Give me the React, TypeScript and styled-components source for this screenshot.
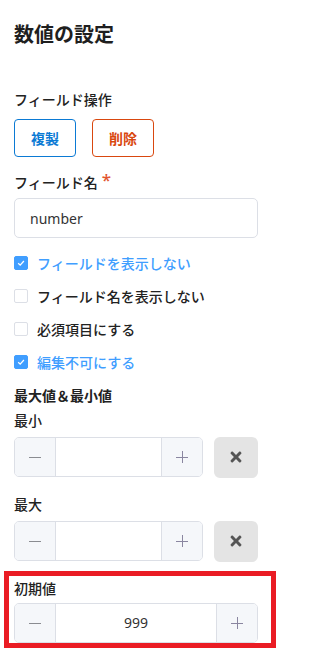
import React from 'react'
import styled, { createGlobalStyle } from 'styled-components'
import { FaTimes } from 'react-icons/fa'

const GlobalStyle = createGlobalStyle`
  body {
    margin: 0;
    background: #fff;
    font-family: "Noto Sans", "Noto Sans CJK JP", sans-serif;
    color: #222;
  }
`

const Panel = styled.div`
  width: 244px;
  padding: 23px 22px 0 14px;
`

const Title = styled.h2`
  margin: 0 0 43px;
  font-size: 20px;
  line-height: 24px;
  font-weight: 700;
  color: #1f1f1f;
`

const Label = styled.div<{ bold?: boolean; gap?: number }>`
  font-size: 14px;
  line-height: 20px;
  font-weight: ${p => (p.bold ? 700 : 500)};
  color: #222;
  margin-bottom: ${p => p.gap ?? 5}px;
  display: flex;
  align-items: flex-start;
`

const Required = styled.span`
  color: #e2542f;
  font-size: 17px;
  line-height: 16px;
  margin-left: 4px;
  margin-top: -1px;
`

const ButtonRow = styled.div`
  display: flex;
  gap: 16px;
  margin-bottom: 16px;
`

const OutlineButton = styled.button<{ tone: 'blue' | 'red' }>`
  width: 62px;
  height: 38px;
  box-sizing: border-box;
  background: #fff;
  border: 1px solid ${p => (p.tone === 'blue' ? '#0b7ad4' : '#d9480f')};
  color: ${p => (p.tone === 'blue' ? '#0b7ad4' : '#d9480f')};
  border-radius: 4px;
  font-family: inherit;
  font-size: 14px;
  font-weight: 700;
  padding: 0;
`

const TextInput = styled.input`
  box-sizing: border-box;
  width: 244px;
  height: 40px;
  border: 1px solid #dcdfe6;
  border-radius: 5px;
  padding: 0 15px;
  font-family: inherit;
  font-size: 14px;
  color: #333;
  outline: none;
  margin-bottom: 8.5px;
`

const CheckRow = styled.label<{ checked?: boolean }>`
  display: flex;
  align-items: center;
  gap: 9px;
  height: 33px;
  font-size: 14px;
  font-weight: 500;
  color: ${p => (p.checked ? '#409eff' : '#222')};
`

const Box = styled.span<{ checked?: boolean }>`
  width: 14px;
  height: 14px;
  box-sizing: border-box;
  border-radius: 2px;
  border: 1px solid ${p => (p.checked ? '#409eff' : '#dcdfe6')};
  background: ${p => (p.checked ? '#409eff' : '#fff')};
  display: flex;
  align-items: center;
  justify-content: center;
`

const Checks = styled.div`
  margin-bottom: 7px;
`

const StepperLine = styled.div<{ gap?: number }>`
  display: flex;
  gap: 11px;
  margin-bottom: ${p => p.gap ?? 0}px;
`

const Stepper = styled.div<{ width: number }>`
  box-sizing: border-box;
  width: ${p => p.width}px;
  height: 40px;
  border: 1px solid #dcdfe6;
  border-radius: 5px;
  display: flex;
  overflow: hidden;
`

const StepButton = styled.span<{ side: 'left' | 'right' }>`
  width: 40px;
  flex: none;
  background: #f5f7fa;
  display: flex;
  align-items: center;
  justify-content: center;
  ${p => (p.side === 'left' ? 'border-right' : 'border-left')}: 1px solid #dcdfe6;
`

const StepValue = styled.span`
  flex: 1;
  display: flex;
  align-items: center;
  justify-content: center;
  font-size: 14px;
  color: #333;
`

const ClearButton = styled.button`
  width: 44px;
  height: 41px;
  border: none;
  border-radius: 6px;
  background: #e4e4e4;
  color: #555;
  display: flex;
  align-items: center;
  justify-content: center;
  padding: 0;
`

const Highlight = styled.section`
  margin: 9px 0 0 -10px;
  width: 272px;
  box-sizing: border-box;
  border: 5px solid #ea1c24;
  padding: 3px 13px 0 5px;
`

const Check = () => (
  <svg width="10" height="10" viewBox="0 0 10 10">
    <path d="M2.2 5.2 L4.2 7.1 L7.9 3" fill="none" stroke="#fff" strokeWidth="1.3" />
  </svg>
)

const Minus = () => (
  <svg width="12" height="12" viewBox="0 0 12 12">
    <path d="M0 6.5 H12" stroke="#8a8c91" strokeWidth="1" />
  </svg>
)

const Plus = () => (
  <svg width="12" height="12" viewBox="0 0 12 12">
    <path d="M0 6.5 H12 M6.5 0 V12" stroke="#8a86a0" strokeWidth="1" />
  </svg>
)

const NumberField = ({ width, value }: { width: number; value?: string }) => (
  <Stepper width={width}>
    <StepButton side="left"><Minus /></StepButton>
    <StepValue>{value}</StepValue>
    <StepButton side="right"><Plus /></StepButton>
  </Stepper>
)

const options = [
  { label: 'フィールドを表示しない', checked: true },
  { label: 'フィールド名を表示しない', checked: false },
  { label: '必須項目にする', checked: false },
  { label: '編集不可にする', checked: true },
]

export default function App() {
  return (
    <>
      <GlobalStyle />
      <Panel>
        <Title>数値の設定</Title>
        <Label gap={9}>フィールド操作</Label>
        <ButtonRow>
          <OutlineButton tone="blue">複製</OutlineButton>
          <OutlineButton tone="red">削除</OutlineButton>
        </ButtonRow>
        <Label>
          フィールド名<Required>*</Required>
        </Label>
        <TextInput defaultValue="number" />
        <Checks>
          {options.map(o => (
            <CheckRow key={o.label} checked={o.checked}>
              <Box checked={o.checked}>{o.checked && <Check />}</Box>
              {o.label}
            </CheckRow>
          ))}
        </Checks>
        <Label bold gap={5}>最大値＆最小値</Label>
        <Label gap={6}>最小</Label>
        <StepperLine gap={17}>
          <NumberField width={190} />
          <ClearButton><FaTimes size={16} /></ClearButton>
        </StepperLine>
        <Label gap={6}>最大</Label>
        <StepperLine>
          <NumberField width={190} />
          <ClearButton><FaTimes size={16} /></ClearButton>
        </StepperLine>
        <Highlight>
          <Label gap={4}>初期値</Label>
          <NumberField width={244} value="999" />
        </Highlight>
      </Panel>
    </>
  )
}
